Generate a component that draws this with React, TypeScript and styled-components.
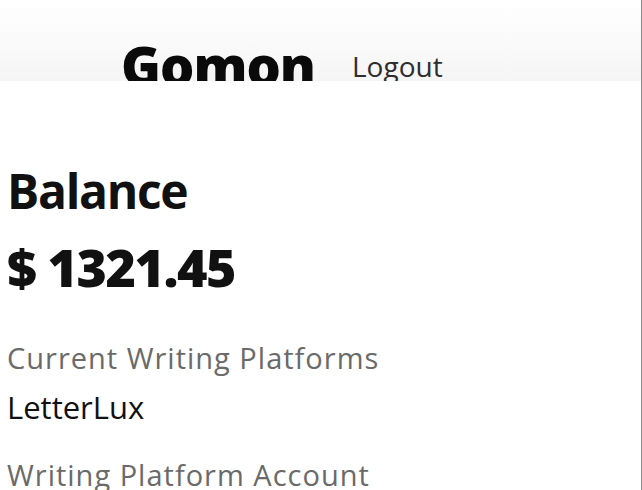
import React from "react";
import styled, { createGlobalStyle } from "styled-components";

const Global = createGlobalStyle`
  html, body { margin: 0; padding: 0; background: #fff; }
  body { font-family: "Open Sans", "Noto Sans", sans-serif; color: #111; }
  * { box-sizing: border-box; }
`;

const Page = styled.div`
  min-height: 100vh;
  width: 642px;
  border-right: 1px solid #8a8a8a;
  overflow: hidden;
`;

const Header = styled.header`
  height: 81px;
  overflow: hidden;
  display: flex;
  align-items: flex-start;
  gap: 37px;
  padding: 38px 0 0 121px;
  background: linear-gradient(to bottom, #ffffff 0%, #fcfcfc 30%, #f5f5f5 100%);
`;

const Logo = styled.div`
  font-family: "Open Sans", sans-serif;
  font-weight: 800;
  font-size: 54px;
  line-height: 1;
  letter-spacing: -1px;
  color: #0a0a0a;
`;

const NavLink = styled.a`
  font-size: 28px;
  line-height: 1;
  margin-top: 14px;
  color: #2e2e2e;
  text-decoration: none;
`;

const Main = styled.main`
  padding: 86px 7px 0;
  display: flex;
  flex-direction: column;
`;

const Title = styled.h1`
  margin: 0;
  font-size: 48px;
  font-weight: 700;
  line-height: 1;
  letter-spacing: -1.3px;
`;

const Amount = styled.div`
  margin-top: 26px;
  font-size: 52px;
  font-weight: 800;
  line-height: 1;
  letter-spacing: -1.5px;
`;

const Label = styled.div<{ $gap: number }>`
  margin-top: ${(p) => p.$gap}px;
  font-size: 29px;
  line-height: 1;
  letter-spacing: 1px;
  color: #6a6a6a;
`;

const Value = styled.div`
  margin-top: 20px;
  font-size: 31px;
  line-height: 1;
  color: #111;
`;

export default function App() {
  return (
    <>
      <Global />
      <Page>
        <Header>
          <Logo>Gomon</Logo>
          <NavLink href="#">Logout</NavLink>
        </Header>
        <Main>
          <Title>Balance</Title>
          <Amount>$ 1321.45</Amount>
          <Label $gap={50}>Current Writing Platforms</Label>
          <Value>LetterLux</Value>
          <Label $gap={37}>Writing Platform Account</Label>
        </Main>
      </Page>
    </>
  );
}
